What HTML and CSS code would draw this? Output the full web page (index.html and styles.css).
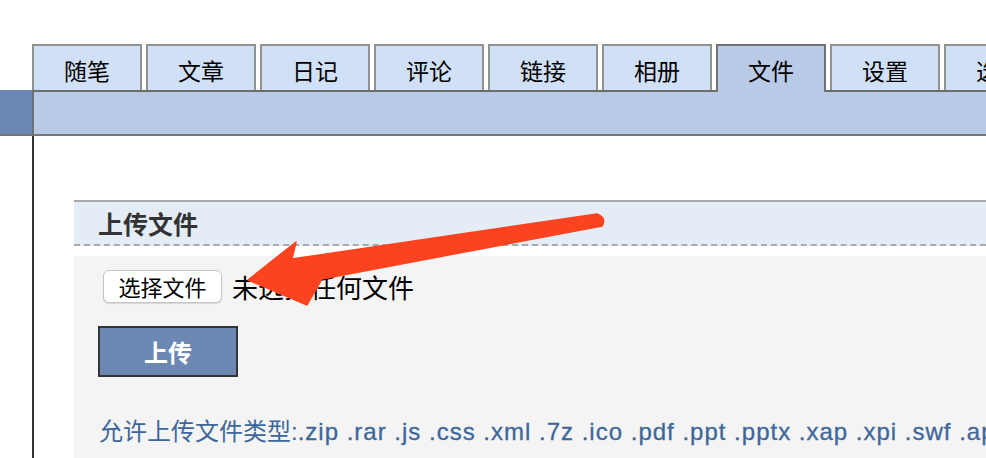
FILE: index.html
```html
<!DOCTYPE html>
<html lang="zh-CN">
<head>
<meta charset="utf-8">
<title>文件</title>
<link rel="stylesheet" href="styles.css">
</head>
<body>
<div class="page">
  <nav class="tabs">
    <a class="tab">随笔</a>
    <a class="tab">文章</a>
    <a class="tab">日记</a>
    <a class="tab">评论</a>
    <a class="tab">链接</a>
    <a class="tab">相册</a>
    <a class="tab active">文件</a>
    <a class="tab">设置</a>
    <a class="tab">选项</a>
  </nav>
  <div class="bar-row">
    <div class="bar-left"></div>
    <div class="bar"></div>
  </div>
  <div class="body-row">
    <div class="side"></div>
    <main class="main">
      <section class="upload">
        <h2 class="upload-title">上传文件</h2>
        <div class="upload-body">
          <div class="file-row">
            <button class="file-btn" type="button">选择文件</button>
            <span class="file-name">未选择任何文件</span>
          </div>
          <button class="submit-btn" type="button">上传</button>
          <p class="allowed">允许上传文件类型:<span class="ext">.zip .rar .js .css .xml .7z .ico .pdf .ppt .pptx .xap .xpi .swf .apk</span></p>
        </div>
      </section>
    </main>
  </div>
  <svg class="arrow" width="986" height="458" viewBox="0 0 986 458" xmlns="http://www.w3.org/2000/svg">
    <path d="M248,280 L296,242 L292,259 L597,214 Q607,218 602,226 L322,279 L307,305 Z" fill="#fc4320" stroke="#fc4320" stroke-width="1.5" stroke-linejoin="round"/>
  </svg>
</div>
</body>
</html>
```
FILE: styles.css
```css
html, body {
  margin: 0;
  padding: 0;
  overflow: hidden;
  background: #fff;
}
body {
  width: 986px;
  height: 458px;
  font-family: "Liberation Sans", "Noto Sans CJK SC", sans-serif;
}
.page {
  position: relative;
  width: 986px;
  height: 458px;
  overflow: hidden;
}
.tabs {
  display: flex;
  gap: 4px;
  padding: 44px 0 0 32px;
  height: 46px;
  align-items: flex-start;
  white-space: nowrap;
}
.tab {
  flex: 0 0 110px;
  box-sizing: border-box;
  height: 46px;
  border: 2px solid #8e938e;
  border-bottom: none;
  background: #d0e0f6;
  color: #000;
  font-family: "Noto Sans CJK SC", sans-serif;
  font-size: 23px;
  padding-top: 5px;
  line-height: 38px;
  text-align: center;
  overflow: hidden;
}
.tab.active {
  height: 48px;
  margin-bottom: -2px;
  background: #b8cae5;
  border-color: #6f736f;
  position: relative;
  z-index: 1;
}
.bar-row {
  display: flex;
  height: 46px;
}
.bar-left {
  flex: 0 0 32px;
  box-sizing: border-box;
  background: #6b87b2;
  border-top: 1px solid #6b87b2;
  border-bottom: 2px solid #777;
}
.bar {
  flex: 1;
  min-width: 0;
  box-sizing: border-box;
  background: #b8cae5;
  border-top: 2px solid #6c6e6c;
  border-left: 2px solid #707070;
  border-bottom: 2px solid #777;
}
.body-row {
  display: flex;
  height: 322px;
}
.side {
  flex: 0 0 32px;
}
.main {
  flex: 1;
  min-width: 0;
  border-left: 2px solid #333;
  padding: 64px 0 0 40px;
}
.upload {
  height: 100%;
  display: flex;
  flex-direction: column;
}
.upload-title {
  margin: 0;
  height: 42px;
  border-top: 2px solid #aaa;
  border-bottom: 2px dashed #aaa;
  background: #e4ecf6;
  color: #333;
  font-family: "Noto Sans CJK SC", sans-serif;
  font-size: 25px;
  font-weight: bold;
  line-height: 42px;
  padding-left: 24px;
}
.upload-body {
  flex: 1;
  margin-top: 10px;
  background: #f4f4f4;
  padding: 14px 0 0 24px;
}
.file-row {
  display: flex;
  align-items: center;
  margin-left: 5px;
}
.file-btn {
  width: 119px;
  height: 33px;
  box-sizing: border-box;
  background: #fff;
  border: 1px solid #c4c4c4;
  border-radius: 6px;
  box-shadow: 0 1px 1px rgba(0,0,0,0.12);
  font-family: "Noto Sans CJK SC", sans-serif;
  font-size: 22px;
  line-height: 31px;
  padding: 0;
  color: #000;
}
.file-name {
  margin-left: 10px;
  font-family: "Noto Sans CJK SC", sans-serif;
  font-size: 26px;
  line-height: 33px;
  color: #000;
}
.submit-btn {
  display: block;
  margin-top: 23px;
  width: 140px;
  height: 51px;
  box-sizing: border-box;
  background: #6b87b2;
  border: 2px solid #333;
  color: #fff;
  font-family: "Noto Sans CJK SC", sans-serif;
  font-size: 24px;
  font-weight: bold;
  padding: 0;
}
.allowed {
  margin: 40px 0 0 1px;
  font-size: 24px;
  line-height: 30px;
  color: #3d679a;
  white-space: nowrap;
}
.ext {
  letter-spacing: 1px;
  -webkit-text-stroke: 0.3px #3d679a;
}
.arrow {
  position: absolute;
  top: 0;
  left: 0;
  pointer-events: none;
}
```
